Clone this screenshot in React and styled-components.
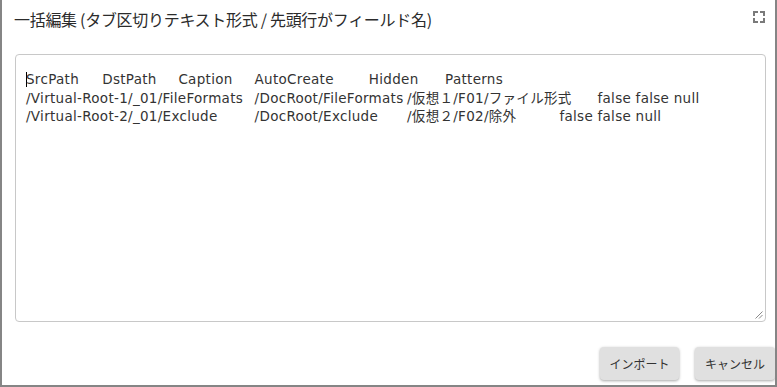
import React from "react";
import styled, { createGlobalStyle } from "styled-components";

const TAB = 38.1;

const Global = createGlobalStyle`
  html, body { margin: 0; padding: 0; background: #ffffff; }
  body { font-family: "DejaVu Sans", "Noto Sans CJK JP", sans-serif; }
  * { box-sizing: border-box; }
`;

const Frame = styled.div`
  width: 777px;
  height: 387px;
  border: 2px solid #858585;
  border-top: none;
  background: #ffffff;
  display: flex;
  flex-direction: column;
  overflow: hidden;
`;

const TitleBar = styled.div`
  height: 38px;
  display: flex;
  align-items: center;
  justify-content: space-between;
  padding: 0 10px 0 12px;
`;

const Title = styled.h1`
  margin: 0;
  font-family: "Noto Sans CJK JP", sans-serif;
  font-weight: 400;
  font-size: 16px;
  color: #2b2b2b;
  letter-spacing: -0.3px;
`;

const IconButton = styled.button`
  border: none;
  background: transparent;
  padding: 0;
  width: 12px;
  height: 12px;
  display: flex;
  color: #7a7a7a;
  margin-top: -4px;
`;

const EditorWrap = styled.div`
  padding: 16px 9px 0 13px;
`;

const Editor = styled.div`
  position: relative;
  width: 751px;
  height: 268px;
  border: 1px solid #c8c8c8;
  border-radius: 4px;
  padding: 15px 10px;
  font-family: "DejaVu Sans", "Noto Sans CJK JP", sans-serif;
  font-size: 13.5px;
  letter-spacing: 0.3px;
  line-height: 18.5px;
  color: #333333;
  overflow: hidden;
  outline: none;
  cursor: text;
`;

const Line = styled.div`
  display: flex;
  white-space: pre;
`;

const Cell = styled.span`
  flex: none;
  width: ${(p) => (p.$tabs ? `${p.$tabs * TAB}px` : "auto")};
`;

const Caret = styled.span`
  display: inline-block;
  width: 1px;
  height: 15px;
  margin-right: -1px;
  background: #000000;
  vertical-align: -3px;
`;

const Grip = styled.svg`
  position: absolute;
  right: 2px;
  bottom: 2px;
  width: 9px;
  height: 9px;
  color: #8a8a8a;
`;

const Actions = styled.div`
  display: flex;
  justify-content: flex-end;
  gap: 16px;
  padding-top: 25px;
`;

const ActionButton = styled.button`
  width: ${(p) => p.$w}px;
  height: 33px;
  border: none;
  border-radius: 4px;
  background: #e0e0e0;
  box-shadow: 0 1px 3px rgba(0, 0, 0, 0.35);
  font-family: "Noto Sans CJK JP", sans-serif;
  font-size: 12px;
  color: #333333;
  padding: 0;
  flex: none;
`;

// each cell: [text, width in tab stops]
const rows = [
  [["SrcPath", 2], ["DstPath", 2], ["Caption", 2], ["AutoCreate", 3], ["Hidden", 2], ["Patterns", 0]],
  [
    ["/Virtual-Root-1/_01/FileFormats", 6],
    ["/DocRoot/FileFormats", 4],
    ["/仮想１/F01/ファイル形式", 5],
    ["false", 1],
    ["false", 1],
    ["null", 0],
  ],
  [
    ["/Virtual-Root-2/_01/Exclude", 6],
    ["/DocRoot/Exclude", 4],
    ["/仮想２/F02/除外", 4],
    ["false", 1],
    ["false", 1],
    ["null", 0],
  ],
];

function FullscreenIcon() {
  return (
    <svg width="12" height="12" viewBox="0 0 12 12" fill="none" stroke="currentColor" strokeWidth="2">
      <path d="M1 5V1h4" />
      <path d="M7 1h4v4" />
      <path d="M11 7v4H7" />
      <path d="M5 11H1V7" />
    </svg>
  );
}

export default function App() {
  return (
    <>
      <Global />
      <Frame>
        <TitleBar>
          <Title>一括編集 (タブ区切りテキスト形式 / 先頭行がフィールド名)</Title>
          <IconButton aria-label="fullscreen">
            <FullscreenIcon />
          </IconButton>
        </TitleBar>
        <EditorWrap>
          <Editor role="textbox" aria-multiline="true" contentEditable suppressContentEditableWarning spellCheck={false}>
            {rows.map((row, i) => (
              <Line key={i}>
                {row.map(([t, n], j) => (
                  <Cell key={j} $tabs={n}>
                    {i === 0 && j === 0 ? <Caret /> : null}
                    {t}
                  </Cell>
                ))}
              </Line>
            ))}
            <Grip viewBox="0 0 9 9" fill="none" stroke="currentColor" strokeWidth="1" contentEditable={false}>
              <path d="M8.5 1.5L1.5 8.5" />
              <path d="M8.5 5L5 8.5" />
            </Grip>
          </Editor>
        </EditorWrap>
        <Actions>
          <ActionButton $w={79}>インポート</ActionButton>
          <ActionButton $w={80}>キャンセル</ActionButton>
        </Actions>
      </Frame>
    </>
  );
}
